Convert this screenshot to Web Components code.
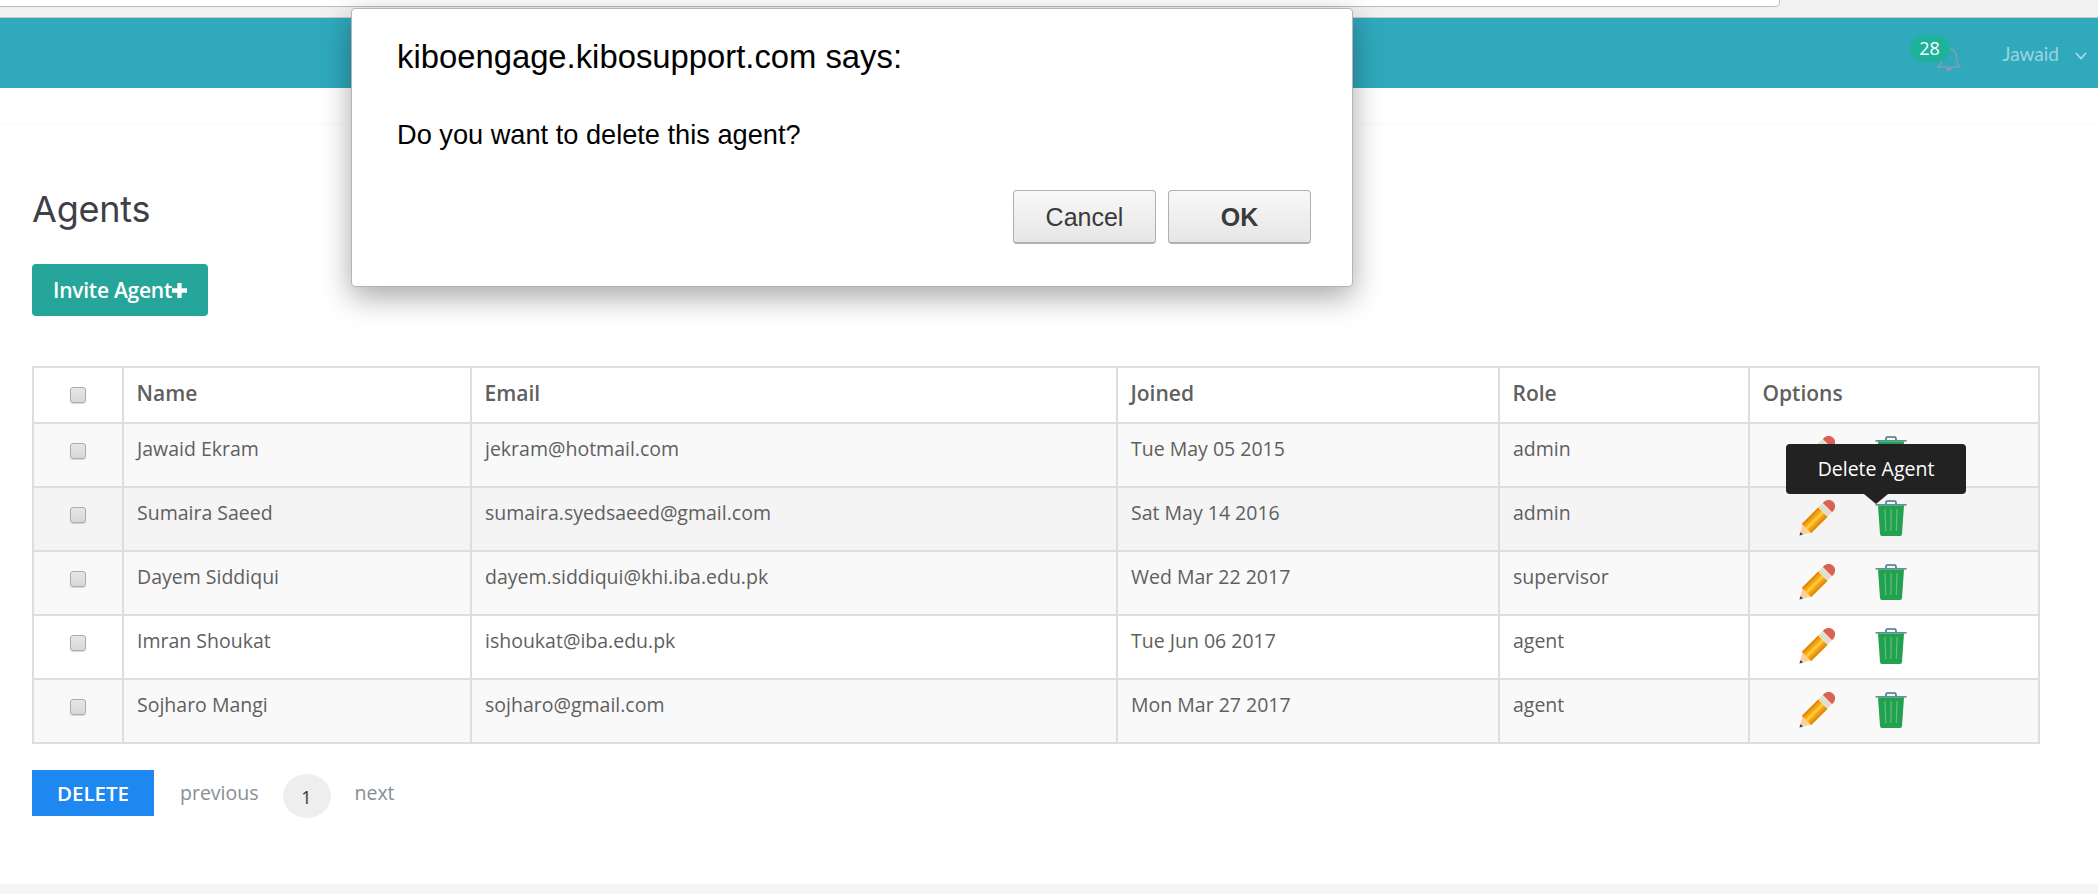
<!DOCTYPE html>
<html>
<head>
<meta charset="utf-8">
<title>Agents</title>
<style>
  html, body { margin: 0; height: 100%; background: #fff; overflow: hidden; }
  body { display: flex; flex-direction: column; height: 894px; font-family: "Open Sans", sans-serif; }
</style>
</head>
<body>
<browser-strip></browser-strip>
<top-nav count="28" user="Jawaid"></top-nav>
<agents-page></agents-page>
<page-footer></page-footer>
<js-dialog title-text="kiboengage.kibosupport.com says:">Do you want to delete this agent?</js-dialog>

<script>
//Flat icons, shared by the rows
const pencilIcon = `
<svg width="37" height="36" viewBox="0 0 37 36" aria-hidden="true">
  <g transform="translate(0.5 35.5) rotate(-45)">
    <path d="M0 0 L10.5 -6 L10.5 6 Z" fill="#fbd09a"/>
    <path d="M0 0 L3.2 -1.8 L3.2 1.8 Z" fill="#444"/>
    <rect x="10" y="-6.5" width="23.5" height="13" fill="#f5a313"/>
    <rect x="10" y="-6.5" width="23.5" height="2.2" fill="#e88a05"/>
    <rect x="10" y="-1.6" width="23.5" height="3.2" fill="#ffc93c"/>
    <rect x="10" y="4.3" width="23.5" height="2.2" fill="#e88a05"/>
    <rect x="33" y="-6.5" width="6.5" height="13" fill="#ebe6d6"/>
    <path d="M35 -6.5 V6.5 M37.2 -6.5 V6.5" stroke="#c9c5b6" stroke-width=".8"/>
    <path d="M39.5 -6.5 h1.7 a6.5 6.5 0 0 1 0 13 h-1.7 Z" fill="#dc6054"/>
  </g>
</svg>`;

const trashIcon = `
<svg width="32" height="36" viewBox="0 0 32 36" aria-hidden="true">
  <path d="M11 4.5 V2.5 Q11 1 12.5 1 H19.5 Q21 1 21 2.5 V4.5" fill="none" stroke="#3f7a80" stroke-width="1.6"/>
  <rect x="0.5" y="4" width="31" height="1.6" fill="#5b9096"/>
  <path d="M3 5.5 H29 L27 34 Q26.9 36 25 36 H7 Q5.1 36 5 34 Z" fill="#22a24f"/>
  <path d="M10 9 L10.7 31 M16 9 V31 M22 9 L21.3 31" stroke="#62bd83" stroke-width="1.2" fill="none"/>
</svg>`;

//Grey strip of the browser above the page
class browserStrip extends HTMLElement {
  constructor() {
    super();
    this._root = this.attachShadow({ mode: "open" });
    this._root.innerHTML = `
    <style>
      :host { display: block; height: 17px; background: #f1f1f1; border-bottom: 1px solid #c9c9c9; box-sizing: content-box; flex: none; }
      .url { width: 1779px; height: 6px; background: #fff; border-right: 1px solid #bdbdbd; border-bottom: 1px solid #bdbdbd; border-radius: 0 0 5px 0; box-sizing: content-box; }
      .wrap { height: 6px; background: #f1f1f1; }
    </style>
    <div class="wrap"><div class="url"></div></div>`;
  }
}
customElements.define("browser-strip", browserStrip);

//Teal bar with the notification bell and the user
class topNav extends HTMLElement {
  constructor() {
    super();
    this._root = this.attachShadow({ mode: "open" });
    this._root.innerHTML = `
    <style>
      :host { display: flex; flex: none; height: 70px; background: #30a9bd; justify-content: flex-end; align-items: flex-start; padding-right: 11px; box-sizing: border-box; }
      .bell { position: relative; width: 24px; height: 26px; margin-top: 28px; margin-right: 42px; }
      .badge { position: absolute; left: -27px; top: -11px; width: 40px; height: 27px; border-radius: 14px; background: #1fb29b; color: #fff; font: 18px/27px "Open Sans", sans-serif; text-align: center; }
      .user { margin-top: 22px; font: 19px/28px "Lato", sans-serif; color: rgba(255,255,255,.52); }
      svg.chev { margin: 34px 0 0 16px; }
    </style>
    <div class="bell">
      <svg width="24" height="26" viewBox="0 0 24 26" fill="none">
        <path d="M1 21 Q4.5 18 4.5 12 Q4.5 3 12 3 Q19.5 3 19.5 12 Q19.5 18 23 21 Z" stroke="#7d9fb3" stroke-width="1.5"/>
        <path d="M9 22 a3 3 0 0 0 6 0 Z" fill="#7d9fb3"/>
      </svg>
      <span class="badge"></span>
    </div>
    <span class="user"></span>
    <svg class="chev" width="12" height="8" viewBox="0 0 12 8" fill="none"><path d="M1 1 L6 6.5 L11 1" stroke="rgba(255,255,255,.6)" stroke-width="1.7"/></svg>`;
  }
  connectedCallback() {
    this._root.querySelector(".badge").textContent = this.getAttribute("count");
    this._root.querySelector(".user").textContent = this.getAttribute("user");
  }
}
customElements.define("top-nav", topNav);

//Teal button with plus
class inviteButton extends HTMLElement {
  constructor() {
    super();
    this._root = this.attachShadow({ mode: "open" });
    this._root.innerHTML = `
    <style>
      :host { display: inline-flex; align-items: center; width: 176px; height: 52px; box-sizing: border-box; padding-left: 21px; background: #26a69a; border-radius: 4px; color: #fff; font: 600 21px "Open Sans", sans-serif; letter-spacing: -0.25px; }
    </style>
    <slot></slot>
    <svg width="15" height="15" viewBox="0 0 14 14"><path d="M5 0 H9 V5 H14 V9 H9 V14 H5 V9 H0 V5 H5 Z" fill="#fff"/></svg>`;
  }
}
customElements.define("invite-button", inviteButton);

//Tooltip above an icon
class hintTip extends HTMLElement {
  constructor() {
    super();
    this._root = this.attachShadow({ mode: "open" });
    this._root.innerHTML = `
    <style>
      :host { position: absolute; left: -89px; top: -56px; width: 180px; height: 50px; background: #222; border-radius: 4px; color: #fff; font: 19.5px/50px "Open Sans", sans-serif; text-align: center; display: block; }
      .arrow { position: absolute; left: 78px; top: 50px; width: 0; height: 0; border: 12px solid transparent; border-bottom: 0; border-top: 10px solid #222; }
    </style>
    <slot></slot><span class="arrow"></span>`;
  }
}
customElements.define("hint-tip", hintTip);

//Table of agents
class agentTable extends HTMLElement {
  constructor() {
    super();
    this._root = this.attachShadow({ mode: "open" });
    this._root.innerHTML = `
    <style>
      :host { display: block; width: 2008px; }
      table { border-collapse: collapse; table-layout: fixed; width: 100%; font-family: "Open Sans", sans-serif; color: #5f5f5f; font-size: 19.5px; }
      th, td { border: 2px solid #dedede; padding: 0 0 0 13px; text-align: left; vertical-align: top; box-sizing: border-box; }
      th { height: 56px; line-height: 51px; font-weight: 600; font-size: 21px; padding-left: 12.5px; background: #fff; color: #606060; }
      td { height: 64px; line-height: 26px; padding-top: 12px; }
      tr:nth-child(odd) td { background: #f9f9f9; }
      tr:nth-child(even) td { background: #fff; }
      tr.hover td { background: #f4f4f4; }
      .c, th.c { padding: 0; text-align: center; }
      .box { display: block; width: 16px; height: 16px; box-sizing: border-box; margin: 19px auto 0; border: 1px solid #adadad; border-radius: 3px; background: linear-gradient(#e6e6e6, #d8d8d8); box-shadow: 0 1px 1px rgba(0,0,0,.15); }
      .ops { display: flex; gap: 39px; padding-left: 36px; }
      .ops span { position: relative; display: block; height: 36px; }
    </style>
    <table>
      <colgroup><col style="width:90px"><col style="width:348px"><col style="width:646px"><col style="width:382px"><col style="width:250px"><col></colgroup>
      <thead><tr><th class="c"><i class="box"></i></th><th>Name</th><th>Email</th><th>Joined</th><th>Role</th><th>Options</th></tr></thead>
      <tbody></tbody>
    </table>`;
  }
  connectedCallback() {
    const agents = [
      ["Jawaid Ekram", "jekram@hotmail.com", "Tue May 05 2015", "admin"],
      ["Sumaira Saeed", "sumaira.syedsaeed@gmail.com", "Sat May 14 2016", "admin"],
      ["Dayem Siddiqui", "dayem.siddiqui@khi.iba.edu.pk", "Wed Mar 22 2017", "supervisor"],
      ["Imran Shoukat", "ishoukat@iba.edu.pk", "Tue Jun 06 2017", "agent"],
      ["Sojharo Mangi", "sojharo@gmail.com", "Mon Mar 27 2017", "agent"]
    ];
    const body = this._root.querySelector("tbody");
    agents.forEach((a, i) => {
      const tr = document.createElement("tr");
      if (i === 1) tr.className = "hover";
      const tip = i === 1 ? "<hint-tip>Delete Agent</hint-tip>" : "";
      tr.innerHTML = `<td class="c"><i class="box"></i></td>
        <td>${a[0]}</td><td>${a[1]}</td><td>${a[2]}</td><td>${a[3]}</td>
        <td><div class="ops"><span>${pencilIcon}</span><span>${trashIcon}${tip}</span></div></td>`;
      body.appendChild(tr);
    });
  }
}
customElements.define("agent-table", agentTable);

//Delete button and the pages
class pagerBar extends HTMLElement {
  constructor() {
    super();
    this._root = this.attachShadow({ mode: "open" });
    this._root.innerHTML = `
    <style>
      :host { display: flex; align-items: flex-start; font-family: "Open Sans", sans-serif; }
      .del { width: 122px; height: 46px; background: #1e88f0; color: #fff; font: 600 20.5px/46px "Open Sans", sans-serif; text-align: center; }
      .link { color: #868e96; font-size: 19.5px; line-height: 46px; }
      .prev { margin-left: 26px; }
      .page { width: 48px; height: 44px; margin: 4px 24px 0; border-radius: 50%; background: #eee; color: #333; font-size: 18px; line-height: 46px; text-align: center; }
    </style>
    <div class="del">DELETE</div>
    <span class="link prev">previous</span>
    <span class="page">1</span>
    <span class="link">next</span>`;
  }
}
customElements.define("pager-bar", pagerBar);

//Main content
class agentsPage extends HTMLElement {
  constructor() {
    super();
    this._root = this.attachShadow({ mode: "open" });
    this._root.innerHTML = `
    <style>
      :host { display: block; flex: 1; }
      .band { height: 35px; border-bottom: 1px solid #fafafa; }
      main { padding: 0 0 0 32px; }
      h1 { margin: 0; padding-top: 60px; font: 400 36px/50px "Inter", sans-serif; color: #3f4047; letter-spacing: -0.2px; }
      .act { margin-top: 30px; height: 52px; }
      agent-table { margin-top: 50px; }
      pager-bar { margin-top: 26px; }
    </style>
    <div class="band"></div>
    <main>
      <h1>Agents</h1>
      <div class="act"><invite-button>Invite Agent</invite-button></div>
      <agent-table></agent-table>
      <pager-bar></pager-bar>
    </main>`;
  }
}
customElements.define("agents-page", agentsPage);

class pageFooter extends HTMLElement {
  constructor() {
    super();
    this._root = this.attachShadow({ mode: "open" });
    this._root.innerHTML = `<style>:host { display: block; flex: none; height: 10px; background: #f5f5f5; }</style>`;
  }
}
customElements.define("page-footer", pageFooter);

//Browser confirm box
class jsDialog extends HTMLElement {
  constructor() {
    super();
    this._root = this.attachShadow({ mode: "open" });
    this._root.innerHTML = `
    <style>
      :host { position: absolute; left: 351px; top: 8px; width: 1002px; height: 279px; box-sizing: border-box; padding: 28px 41px 0 45px; background: #fff; border-radius: 4px; border: 1px solid #b5b5b5; box-shadow: 0 10px 30px rgba(0,0,0,.35); font-family: "Liberation Sans", sans-serif; color: #000; display: flex; flex-direction: column; }
      .title { font-size: 32.8px; line-height: 40px; }
      .msg { font-size: 27.2px; line-height: 34px; margin-top: 41px; }
      .btns { display: flex; justify-content: flex-end; gap: 12px; margin-top: 38px; }
      .btn { width: 143px; height: 54px; box-sizing: border-box; border: 1px solid #b0b0b0; border-bottom-width: 2px; border-radius: 4px; background: linear-gradient(#f8f8f8, #e6e6e6); color: #3a3a3a; font-size: 25px; line-height: 53px; text-align: center; }
      .ok { font-weight: 700; }
    </style>
    <div class="title"></div>
    <div class="msg"><slot></slot></div>
    <div class="btns"><div class="btn">Cancel</div><div class="btn ok">OK</div></div>`;
  }
  connectedCallback() {
    this._root.querySelector(".title").textContent = this.getAttribute("title-text");
  }
}
customElements.define("js-dialog", jsDialog);
</script>
</body>
</html>
